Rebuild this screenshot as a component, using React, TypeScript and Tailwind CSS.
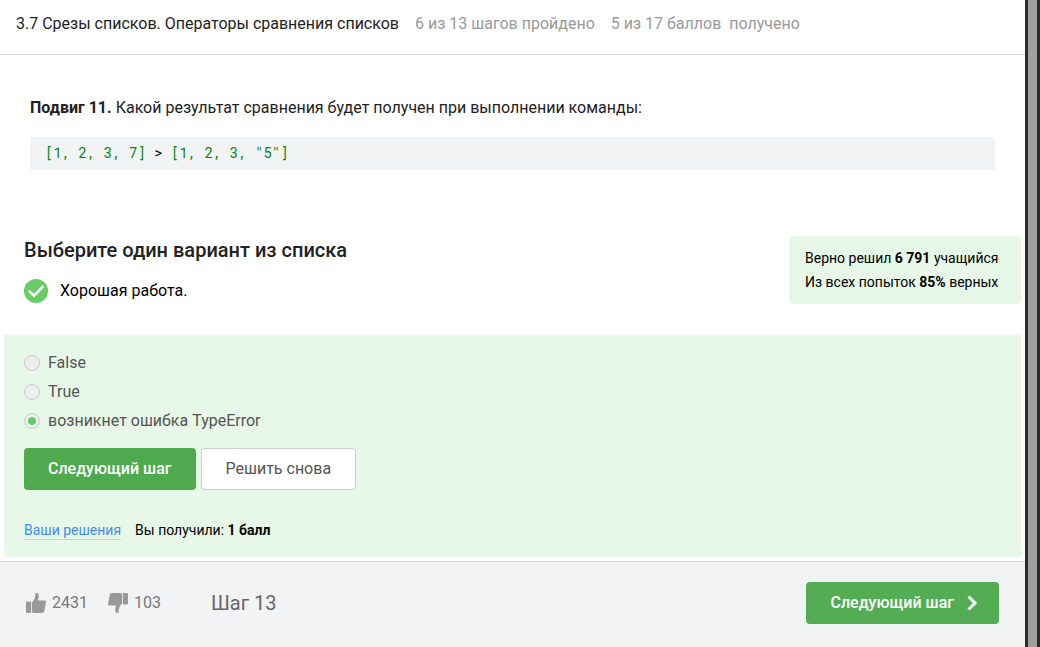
import { useState } from "react";

const options = ["False", "True", "возникнет ошибка TypeError"];

function CheckIcon() {
  return (
    <svg className="size-6 shrink-0" viewBox="0 0 24 24" aria-hidden="true">
      <circle cx="12" cy="12" r="12" fill="#66cc66" />
      <path d="M4.8 11.7 10 16.7 19.4 7" fill="none" stroke="#fff" strokeWidth="2.6" />
    </svg>
  );
}

function ThumbIcon({ down = false }: { down?: boolean }) {
  return (
    <svg className={down ? "size-5 rotate-180" : "size-5"} viewBox="0 0 20 20" fill="#999" aria-hidden="true">
      <path d="M.9 8.6h3.6q.7 0 .7.8v9.7q0 .8-.7.8H.9q-.9 0-.9-.8V9.4q0-.8.9-.8Z" />
      <path d="M6 9.5C7.8 7.6 9 5.4 9.2 3.2L9.3 1C9.4.2 10 0 10.7 0c1.5 0 2.1 1.2 2.1 2.8 0 1.8-.5 3.3-.9 4.6h6.5c1.1 0 1.8.8 1.6 1.8l-1.6 8.4c-.3 1.6-1.1 2.4-2.6 2.4H8.3c-1 0-1.8-.4-2.3-1Z" />
    </svg>
  );
}

function Header() {
  return (
    <header className="flex h-[55px] items-center gap-4 border-b border-[#d9d9d9] px-4 pb-1.5 whitespace-pre text-[#999]">
      <h1 className="text-[#222]">3.7 Срезы списков. Операторы сравнения списков</h1>
      <span>6 из 13 шагов пройдено</span>
      <span>5 из 17 баллов{"  "}получено</span>
    </header>
  );
}

export default function App() {
  const [answer, setAnswer] = useState(2);

  return (
    <div className="flex min-h-screen bg-white font-['Roboto',sans-serif] text-base text-black">
      <div className="flex min-w-0 flex-1 flex-col">
        <Header />
        <main className="px-1 pb-1">
          <section className="px-[26px] pt-[41px] text-[#222]">
            <p>
              <strong>Подвиг 11.</strong> Какой результат сравнения будет получен при выполнении команды:
            </p>
            <pre className="mt-[17px] bg-[#f2f3f5] px-[15px] pt-[5px] pb-[7px] font-['Roboto_Mono','DejaVu_Sans_Mono',monospace] text-sm leading-[21px] text-[#008800]">
              [1, 2, 3, 7] <span className="text-black">&gt;</span> [1, 2, 3, "5"]
            </pre>
          </section>

          <section className="mt-[66px] flex items-start justify-between pl-5">
            <div>
              <h2 className="text-xl leading-7 font-medium text-[#222]">Выберите один вариант из списка</h2>
              <p className="mt-[15px] flex items-center gap-3">
                <CheckIcon />
                Хорошая работа.
              </p>
            </div>
            <div className="min-w-58 rounded bg-[#e7f8e9] px-4 py-[10px] text-sm leading-6">
              <p>Верно решил <b>6 791</b> учащийся</p>
              <p>Из всех попыток <b>85%</b> верных</p>
            </div>
          </section>

          <form className="mt-[31px] bg-[#e7f8e9] px-5 pt-4 pb-[17px]" onSubmit={(e) => e.preventDefault()}>
            <fieldset aria-label="Варианты ответа" className="flex flex-col items-start gap-[5px] text-[#555]">
              {options.map((option, i) => (
                <label key={option} className="flex items-center gap-2">
                  <input
                    type="radio"
                    name="answer"
                    checked={answer === i}
                    onChange={() => setAnswer(i)}
                    className="grid size-4 appearance-none place-items-center rounded-full border border-[#ccc] bg-[#eee] before:size-2 before:rounded-full checked:before:bg-[#66cc66]"
                  />
                  {option}
                </label>
              ))}
            </fieldset>
            <div className="mt-[15px] flex gap-[5px]">
              <button type="button" className="h-[42px] rounded bg-[#4fa94f] px-6 font-medium text-white">
                Следующий шаг
              </button>
              <button type="submit" className="h-[42px] rounded border border-[#ccc] bg-white px-6 text-[#555]">
                Решить снова
              </button>
            </div>
            <div className="mt-[31px] flex gap-[14px] text-sm leading-[18px]">
              <a href="#solutions" className="border-b border-[#b3d4fc] text-[#4488ee]">Ваши решения</a>
              <span>Вы получили: <b>1 балл</b></span>
            </div>
          </form>
        </main>

        <footer className="flex flex-1 items-start justify-between border-t border-[#d5d6d9] bg-[#f2f3f5] px-[26px] pt-5">
          <div className="flex h-[42px] items-center text-[#777]">
            <button type="button" aria-label="Нравится" className="flex items-center gap-1.5">
              <ThumbIcon />
              2431
            </button>
            <button type="button" aria-label="Не нравится" className="ml-5 flex items-center gap-1.5">
              <ThumbIcon down />
              103
            </button>
            <span className="ml-[50px] text-xl text-[#666]">Шаг 13</span>
          </div>
          <button type="button" className="flex h-[42px] items-center gap-3 rounded bg-[#54ad54] pr-[21px] pl-[25px] font-medium text-white">
            Следующий шаг
            <svg className="h-4 w-3" viewBox="0 0 12 16" fill="none" stroke="#fff" strokeWidth="3" aria-hidden="true">
              <path d="m2.5 1.5 6.5 6.5-6.5 6.5" />
            </svg>
          </button>
        </footer>
      </div>
      <div className="w-[15px] shrink-0 border-x-3 border-[#2b2b2b] bg-[#9f9f9f]" />
    </div>
  );
}
